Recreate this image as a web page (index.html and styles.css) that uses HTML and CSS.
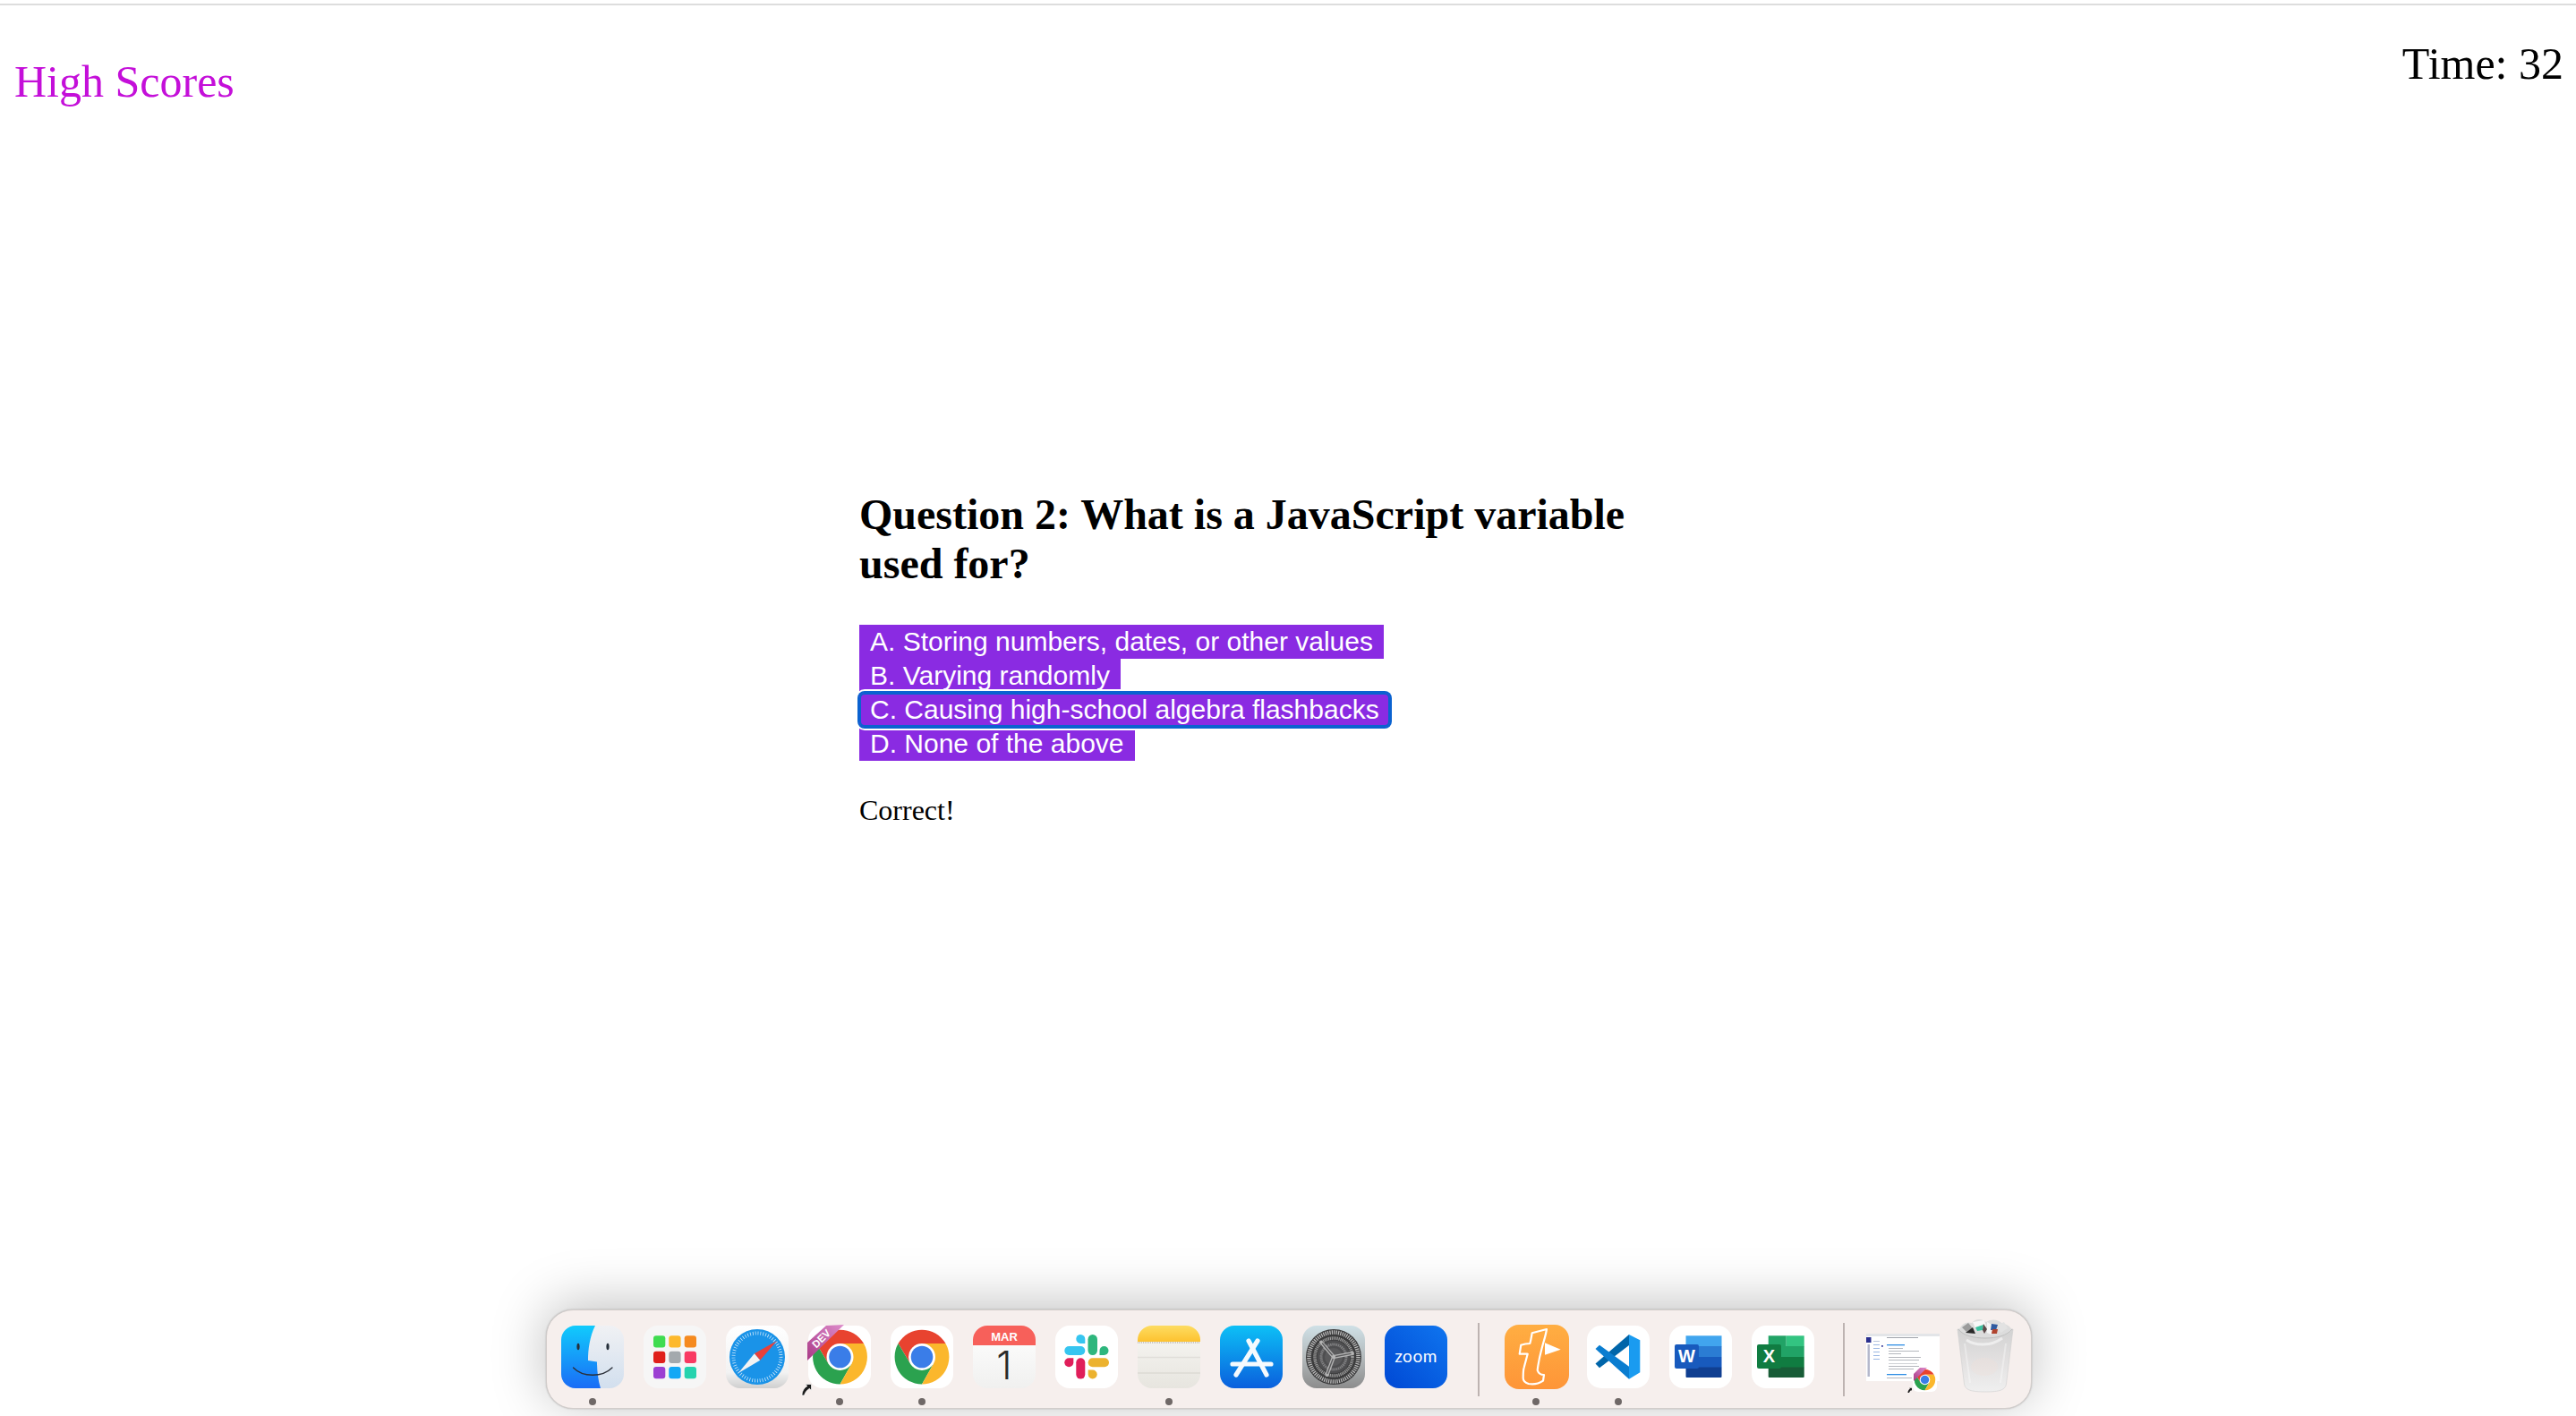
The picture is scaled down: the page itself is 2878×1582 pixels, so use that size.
FILE: index.html
```html
<!DOCTYPE html>
<html lang="en">
<head>
<meta charset="utf-8">
<title>Code Quiz</title>
<link rel="stylesheet" href="styles.css">
</head>
<body>
<svg class="defs" width="0" height="0" aria-hidden="true">
  <defs>
    <symbol id="chrome" viewBox="0 0 70 70" overflow="visible">
      <path fill="#e8432f" d="M61.5 20A30.6 30.6 0 0 0 8.5 20L22 42.5 35 20Z"/>
      <path fill="#2ba24f" d="M8.5 20A30.6 30.6 0 0 0 35 65.6L48 42.5H22Z"/>
      <path fill="#fbb72c" d="M35 65.6A30.6 30.6 0 0 0 61.5 20H35L48 42.5Z"/>
      <circle cx="35" cy="35" r="15" fill="#fff"/>
      <circle cx="35" cy="35" r="12.3" fill="#3a7de8"/>
    </symbol>
    <linearGradient id="finderL" x1="0" y1="0" x2="0" y2="1"><stop offset="0" stop-color="#11cbfc"/><stop offset="1" stop-color="#1a6cf6"/></linearGradient>
    <linearGradient id="finderR" x1="0" y1="0" x2="0" y2="1"><stop offset="0" stop-color="#f0f1f4"/><stop offset="1" stop-color="#d2dfee"/></linearGradient>
    <linearGradient id="safariBg" x1="0" y1="0" x2="0" y2="1"><stop offset="0" stop-color="#fff"/><stop offset=".75" stop-color="#f2f2f2"/><stop offset="1" stop-color="#cfcfcf"/></linearGradient>
    <linearGradient id="paper" x1="0" y1="0" x2="0" y2="1"><stop offset="0" stop-color="#fff"/><stop offset="1" stop-color="#f0f0ef"/></linearGradient>
    <linearGradient id="notesTop" x1="0" y1="0" x2="0" y2="1"><stop offset="0" stop-color="#fddc62"/><stop offset="1" stop-color="#fdc22f"/></linearGradient>
    <linearGradient id="notesPage" x1="0" y1="0" x2="0" y2="1"><stop offset="0" stop-color="#f8f7f4"/><stop offset="1" stop-color="#e7e5df"/></linearGradient>
    <linearGradient id="store" x1="0" y1="0" x2="0" y2="1"><stop offset="0" stop-color="#0dc0f6"/><stop offset="1" stop-color="#0a5fdd"/></linearGradient>
    <linearGradient id="gearBg" x1="0" y1="0" x2="0" y2="1"><stop offset="0" stop-color="#cfe0e6"/><stop offset=".5" stop-color="#b4babc"/><stop offset="1" stop-color="#8c8c8c"/></linearGradient>
    <linearGradient id="zoomBg" x1="1" y1="0" x2="0" y2="1"><stop offset="0" stop-color="#0f75ef"/><stop offset="1" stop-color="#0048d4"/></linearGradient>
    <linearGradient id="tally" x1="0" y1="0" x2="0" y2="1"><stop offset="0" stop-color="#ffae42"/><stop offset="1" stop-color="#fe9538"/></linearGradient>
    <linearGradient id="ribbon" x1="0" y1="1" x2="1" y2="0"><stop offset="0" stop-color="#a93a86"/><stop offset="1" stop-color="#de8ccb"/></linearGradient>
    <linearGradient id="cup" x1="0" y1="0" x2="0" y2="1"><stop offset="0" stop-color="#d2d2d2"/><stop offset=".5" stop-color="#e2e0e0"/><stop offset="1" stop-color="#efefef"/></linearGradient>
    <clipPath id="rr"><rect width="70" height="70" rx="16"/></clipPath>
  </defs>
</svg>

<div class="topline"></div>

<header class="bar">
  <a class="scores">High Scores</a>
  <div class="time">Time: 32</div>
</header>

<main class="quiz">
  <h2 class="question">Question 2: What is a JavaScript variable used for?</h2>
  <div class="options">
    <button class="opt">A. Storing numbers, dates, or other values</button>
    <button class="opt">B. Varying randomly</button>
    <button class="opt focus">C. Causing high-school algebra flashbacks</button>
    <button class="opt">D. None of the above</button>
  </div>
  <p class="result">Correct!</p>
</main>

<footer class="dock">
  <div class="item on">
    <svg class="ic" viewBox="0 0 70 70"><g clip-path="url(#rr)">
      <rect width="70" height="70" fill="url(#finderR)"/>
      <path fill="url(#finderL)" d="M0 0H38C32 12 30 26 30 39L40 40.500C40 50 41 60 44 70H0Z"/>
      <ellipse cx="19" cy="23.500" rx="1.600" ry="3.800" fill="#26303a"/>
      <ellipse cx="52" cy="23.500" rx="1.600" ry="3.800" fill="#26303a"/>
      <path d="M13.500 47C24 58 46 58 57 47" fill="none" stroke="#2b2f38" stroke-width="1.300" stroke-linecap="round"/>
    </g></svg>
    <span class="dot"></span>
  </div>
  <div class="item">
    <svg class="ic" viewBox="0 0 70 70">
      <rect width="70" height="70" rx="16" fill="#f6f6f6"/>
      <rect x="11" y="11.300" width="13.300" height="13.300" rx="3" fill="#3fdc50"/>
      <rect x="28.300" y="11.300" width="13.300" height="13.300" rx="3" fill="#fdb92c"/>
      <rect x="45.700" y="11.300" width="13.300" height="13.300" rx="3" fill="#f58a1f"/>
      <rect x="11" y="28.700" width="13.300" height="13.300" rx="3" fill="#e0201b"/>
      <rect x="28.300" y="28.700" width="13.300" height="13.300" rx="3" fill="#a3a9ad"/>
      <rect x="45.700" y="28.700" width="13.300" height="13.300" rx="3" fill="#f93a62"/>
      <rect x="11" y="46" width="13.300" height="13.300" rx="3" fill="#9c40d2"/>
      <rect x="28.300" y="46" width="13.300" height="13.300" rx="3" fill="#12a8f5"/>
      <rect x="45.700" y="46" width="13.300" height="13.300" rx="3" fill="#25d3ae"/>
    </svg>
    <span class="dot off"></span>
  </div>
  <div class="item">
    <svg class="ic" viewBox="0 0 70 70">
      <rect width="70" height="70" rx="16" fill="url(#safariBg)"/>
      <circle cx="35" cy="35" r="31" fill="#1a93e8"/>
      <circle cx="35" cy="35" r="26.500" fill="none" stroke="#cfe8fa" stroke-width="4" stroke-dasharray=".8 2.100"/>
      <polygon points="57,17 38.200,38.800 31.800,31.200" fill="#e8403a"/>
      <polygon points="14,53 38.200,38.800 31.800,31.200" fill="#f3f3f3"/>
    </svg>
    <span class="dot off"></span>
  </div>
  <div class="item on">
    <svg class="ic" viewBox="0 0 70 70">
      <rect width="70" height="70" rx="16" fill="#fff"/>
      <use href="#chrome" x="0.500" y="0" width="70" height="70"/>
      <polygon points="20,0 40,-1 -1,39 -1,19" fill="url(#ribbon)"/>
      <text class="rib" x="14.500" y="18.500" transform="rotate(-45 14.500 14.500)" text-anchor="middle">DEV</text>
      <path d="M-7 78C-7 73 -4.500 69.500 -1 67.500L-3.500 65.500H3.500V72.500L1.500 70.300C-1.500 72 -3.500 74.500 -4.500 78Z" fill="#1c1c1c" stroke="#fff" stroke-width=".7"/>
    </svg>
    <span class="dot"></span>
  </div>
  <div class="item on">
    <svg class="ic" viewBox="0 0 70 70">
      <rect width="70" height="70" rx="16" fill="#fff"/>
      <use href="#chrome" x="0" y="0" width="70" height="70"/>
    </svg>
    <span class="dot"></span>
  </div>
  <div class="item">
    <svg class="ic" viewBox="0 0 70 70"><g clip-path="url(#rr)">
      <rect width="70" height="70" fill="url(#paper)"/>
      <rect width="70" height="22" fill="#f7605a"/>
      <text class="mar" x="35" y="16.500" text-anchor="middle">MAR</text>
      <text class="day" x="35" y="60" text-anchor="middle">1</text>
    </g></svg>
    <span class="dot off"></span>
  </div>
  <div class="item">
    <svg class="ic" viewBox="0 0 70 70">
      <rect width="70" height="70" rx="16" fill="#fff"/>
      <rect x="10.300" y="23" width="23" height="10" rx="5" fill="#36c5f0"/>
      <path d="M33.300 20H28a5 5 0 1 1 5.300-5Z" fill="#36c5f0"/>
      <rect x="36.500" y="10" width="10.500" height="23" rx="5.200" fill="#2eb67d"/>
      <path d="M49.500 33V28a5 5 0 1 1 5 5Z" fill="#2eb67d"/>
      <rect x="23.300" y="36.300" width="10" height="23.300" rx="5" fill="#e01e5a"/>
      <path d="M20.300 36.300V41.300a5 5 0 1 1 -5-5Z" fill="#e01e5a"/>
      <rect x="36.700" y="36.300" width="23.300" height="10" rx="5" fill="#ecb22e"/>
      <path d="M36.700 49.500H41.700a5 5 0 1 1 -5 5Z" fill="#ecb22e"/>
    </svg>
    <span class="dot off"></span>
  </div>
  <div class="item on">
    <svg class="ic" viewBox="0 0 70 70"><g clip-path="url(#rr)">
      <rect width="70" height="70" fill="url(#notesPage)"/>
      <rect width="70" height="18" fill="url(#notesTop)"/>
      <line x1="0" y1="19" x2="70" y2="19" stroke="#b9b6ae" stroke-width="1.600" stroke-dasharray="1 1"/>
      <line x1="0" y1="35.500" x2="70" y2="35.500" stroke="#e0ded9" stroke-width="1.300"/>
      <line x1="0" y1="53" x2="70" y2="53" stroke="#dcdad4" stroke-width="1.300"/>
    </g></svg>
    <span class="dot"></span>
  </div>
  <div class="item">
    <svg class="ic" viewBox="0 0 70 70">
      <rect width="70" height="70" rx="16" fill="url(#store)"/>
      <g stroke="#fff" stroke-width="5.200" stroke-linecap="round" fill="none" opacity=".96">
        <line x1="32" y1="17" x2="52" y2="55"/>
        <line x1="42" y1="17" x2="18" y2="55"/>
        <line x1="14" y1="43" x2="57" y2="43"/>
      </g>
    </svg>
    <span class="dot off"></span>
  </div>
  <div class="item">
    <svg class="ic" viewBox="0 0 70 70">
      <rect width="70" height="70" rx="16" fill="url(#gearBg)"/>
      <circle cx="35" cy="35" r="31" fill="#3d3d3e"/>
      <circle cx="35" cy="35" r="27.500" fill="none" stroke="#bdbdbd" stroke-width="4.500" stroke-dasharray="1.200 1.200"/>
      <circle cx="35" cy="35" r="24" fill="#3a3a3b"/>
      <circle cx="35" cy="35" r="21" fill="none" stroke="#9a9a9a" stroke-width="3.600" stroke-dasharray="1.200 .8"/>
      <circle cx="35" cy="35" r="18.500" fill="#4e4e50"/>
      <circle cx="35" cy="35" r="14" fill="none" stroke="#808082" stroke-width="3" stroke-dasharray="1.500 .7"/>
      <circle cx="35" cy="35" r="10" fill="#5a5a5c"/>
      <g stroke="#b4b4b4" stroke-width="4" stroke-linecap="round">
        <line x1="35" y1="35" x2="21" y2="18.500"/>
        <line x1="35" y1="35" x2="56" y2="31"/>
        <line x1="35" y1="35" x2="27.500" y2="55"/>
      </g>
      <g stroke="#5c5c5e" stroke-width="1.400" stroke-linecap="round">
        <line x1="35" y1="35" x2="22.500" y2="20"/>
        <line x1="35" y1="35" x2="54" y2="31.400"/>
        <line x1="35" y1="35" x2="28" y2="53.500"/>
      </g>
      <circle cx="35" cy="35" r="2.200" fill="#b4b4b4"/>
    </svg>
    <span class="dot off"></span>
  </div>
  <div class="item">
    <svg class="ic" viewBox="0 0 70 70">
      <rect width="70" height="70" rx="16" fill="url(#zoomBg)"/>
      <text class="zoomtxt" x="35" y="41" text-anchor="middle">zoom</text>
    </svg>
    <span class="dot off"></span>
  </div>

  <div class="sep sep-a"></div>

  <div class="item tally-item on">
    <svg class="ic" viewBox="0 0 70 70" overflow="visible">
      <rect x="0" y="-1" width="72" height="72" rx="16" fill="url(#tally)"/>
      <path d="M30.700 8.300 47 4C46 11 43.500 18 41.700 25 39.500 33 37.500 42 36.700 50 38 54 41 55 44 55L43 61.700C38 65 32 66 26.700 65 22 63.500 20.500 61 20.700 58 20.700 54 20.700 50 21.700 46.700L25.700 31.700H16.700L18.300 21.700C21.500 20.500 25 20 28.300 20 29.500 16 30 12 30.700 8.300Z" fill="none" stroke="#fff" stroke-width="2.200" stroke-linejoin="round"/>
      <polygon points="45,19.300 62.700,26.700 45,32.700" fill="#fff"/>
    </svg>
    <span class="dot"></span>
  </div>
  <div class="item on">
    <svg class="ic" viewBox="0 0 70 70">
      <rect width="70" height="70" rx="16" fill="#fff"/>
      <polygon points="47,10 47,22 14,47.300 9.500,42.500" fill="#0065a9"/>
      <polygon points="9.500,26 14,21.700 47,45.700 47,59.700" fill="#0a7dd0"/>
      <polygon points="47,10 59.300,16.300 59.300,52.300 47,59.700" fill="#1a9bf0"/>
    </svg>
    <span class="dot"></span>
  </div>
  <div class="item">
    <svg class="ic" viewBox="0 0 70 70">
      <rect width="70" height="70" rx="16" fill="#fff"/>
      <rect x="18.500" y="11.300" width="40" height="12" fill="#41a5ee"/>
      <rect x="18.500" y="23" width="40" height="12" fill="#2b7cd3"/>
      <rect x="18.500" y="35" width="40" height="12" fill="#185abd"/>
      <rect x="18.500" y="46.500" width="40" height="11.500" rx="1" fill="#103f91"/>
      <rect x="6" y="21" width="27" height="27" rx="2" fill="#185abd"/>
      <text class="office" x="19.500" y="41" text-anchor="middle">W</text>
    </svg>
    <span class="dot off"></span>
  </div>
  <div class="item">
    <svg class="ic" viewBox="0 0 70 70">
      <rect width="70" height="70" rx="16" fill="#fff"/>
      <rect x="18.700" y="11.300" width="20" height="12" fill="#21a366"/>
      <rect x="38.700" y="11.300" width="20" height="12" fill="#33c481"/>
      <rect x="18.700" y="23" width="40" height="12" fill="#21a366"/>
      <rect x="18.700" y="35" width="40" height="12" fill="#107c41"/>
      <rect x="18.700" y="46.500" width="40" height="11.500" rx="1" fill="#185c37"/>
      <rect x="6" y="21" width="27" height="27" rx="2" fill="#107c41"/>
      <text class="office" x="19.500" y="41" text-anchor="middle">X</text>
    </svg>
    <span class="dot off"></span>
  </div>

  <div class="sep sep-b"></div>

  <div class="item wide">
    <svg class="ic thumb" viewBox="0 0 80 70" overflow="visible">
      <rect x="0" y="9" width="82" height="53" fill="#fff"/>
      <rect x="0" y="9" width="82" height="3" fill="#e3e5e8"/>
      <rect x="0" y="13" width="5.500" height="6" fill="#2a2f8f"/>
      <rect x="1.500" y="21" width="2.500" height="36" fill="#b4b8cc"/>
      <rect x="8" y="17" width="7" height="1" fill="#b9c6dd"/>
      <rect x="8" y="21" width="7" height="1" fill="#9db9e4"/>
      <rect x="8" y="25" width="7" height="1" fill="#9db9e4"/>
      <rect x="8" y="29" width="7" height="1" fill="#9db9e4"/>
      <rect x="8" y="33" width="7" height="1" fill="#9db9e4"/>
      <rect x="8" y="37" width="7" height="1" fill="#9db9e4"/>
      <rect x="17" y="22" width="1.800" height="1.800" fill="#3c3f9c"/>
      <rect x="23" y="13" width="35" height="1" fill="#a0a4ab"/>
      <rect x="23" y="21" width="20" height="1.300" fill="#2f8ee5"/>
      <rect x="25" y="25" width="16" height="1" fill="#b4b7bd"/>
      <rect x="25" y="28" width="34" height="1" fill="#b4b7bd"/>
      <rect x="25" y="31" width="14" height="1" fill="#b4b7bd"/>
      <rect x="25" y="35" width="36" height="1" fill="#b4b7bd"/>
      <rect x="25" y="38" width="34" height="1" fill="#b4b7bd"/>
      <rect x="25" y="42" width="32" height="1" fill="#d0d2d6"/>
      <rect x="25" y="45" width="34" height="1" fill="#b4b7bd"/>
      <rect x="25" y="48" width="28" height="1" fill="#b4b7bd"/>
      <rect x="23" y="54" width="22" height="1.300" fill="#2f8ee5"/>
      <rect x="23" y="58" width="28" height="1" fill="#b4b7bd"/>
      <rect x="52" y="47" width="27" height="27" rx="6" fill="#fff"/>
      <use href="#chrome" x="52" y="47" width="27" height="27"/>
      <polygon points="60,47 68,47 53,62 53,54" fill="url(#ribbon)"/>
      <path d="M46.500 75C46.500 73 47.500 71.500 49 70.500L48 69.800H51V73L50.200 72C49 73 48.300 74 48 75Z" fill="#1c1c1c"/>
    </svg>
  </div>
  <div class="item trash">
    <svg class="ic trash-ic" viewBox="0 -6 62 80" overflow="visible">
      <path d="M0 4 7.500 65C8.500 72 15 74 31 74S53.500 72 54.500 65L62 4Z" fill="url(#cup)" stroke="#cfcfcf" stroke-width=".6"/>
      <path d="M2 5C4 -2 10 -5 16 -3 20 -8 27 -8 32 -4 38 -8 46 -7 50 -2 55 -2 59 1 61 5 58 11 44 14 31 14S5 11 2 5Z" fill="#dcdcdc"/>
      <polygon points="5,2 12,-3 17,3 10,7" fill="#9b9b9b"/>
      <polygon points="17,-4 30,-6 32,1 20,3" fill="#f7f7f7"/>
      <polygon points="9,8 17,2 20,9" fill="#2a2a2a"/>
      <polygon points="20,2 29,-1 28,5 22,6" fill="#3cc2a0"/>
      <polygon points="29,-2 33,4 30,9 28,5" fill="#5c4a4a"/>
      <polygon points="33,-4 40,0 38,10 33,8" fill="#f5f5f5"/>
      <polygon points="38,-2 45,-1 43,5 37,5" fill="#2f5aa0"/>
      <polygon points="39,4 45,4 44,9 38,9" fill="#b0442f"/>
      <polygon points="45,-1 52,-4 56,3 48,8" fill="#e2e2e2"/>
      <path d="M1 4C6 11 18 14 31 14S56 11 61 4" fill="none" stroke="#bfbfbf" stroke-width="1"/>
      <path d="M10 16C20 23 38 23 50 14" fill="none" stroke="#fff" stroke-width="3" opacity=".55"/>
      <path d="M8 20 14 64M54 20 48 64" stroke="#fff" stroke-width="2" opacity=".35" fill="none"/>
      <ellipse cx="30" cy="46" rx="15" ry="10" fill="#efdfdb" opacity=".35"/>
    </svg>
  </div>
</footer>
</body>
</html>
```

FILE: styles.css
```css
* { box-sizing: border-box; }

html, body { margin: 0; padding: 0; }

body {
  height: 1582px;
  width: 2878px;
  overflow: hidden;
  display: flex;
  flex-direction: column;
  background: #fff;
  font-family: "Liberation Serif", "Times New Roman", serif;
  color: #000;
}

.defs { position: absolute; }

.topline {
  flex: none;
  height: 2px;
  margin-top: 4px;
  background: #dddddd;
}

.bar {
  flex: none;
  display: flex;
  justify-content: space-between;
  align-items: flex-start;
  padding: 0 14px 0 16px;
  height: 100px;
  font-size: 50px;
  line-height: 57px;
}

.scores { color: #c40fd9; padding-top: 57px; }

.time { padding-top: 37px; }

.quiz {
  flex: 1;
  width: 958px;
  margin: 0 auto;
  padding-top: 441px;
}

.question {
  margin: 0;
  font-size: 48px;
  font-weight: bold;
  line-height: 55px;
}

.options {
  display: flex;
  flex-direction: column;
  align-items: flex-start;
  margin-top: 41px;
}

.opt {
  display: block;
  height: 38px;
  padding: 0 12px;
  border: 0;
  background: #8a2be2;
  color: #fff;
  font-family: "Liberation Sans", Arial, sans-serif;
  font-size: 30px;
  line-height: 38px;
  white-space: nowrap;
}

.opt.focus {
  position: relative;
  z-index: 1;
  border-radius: 6px;
  box-shadow: inset 0 0 0 2px #0a62d0, 0 0 0 2px #0a62d0, 0 0 0 4px #fff;
}

.result {
  margin: 37px 0 0;
  font-size: 32px;
  line-height: 37px;
}

.dock {
  flex: none;
  display: flex;
  align-items: flex-start;
  gap: 22px;
  width: 1660px;
  height: 111px;
  margin: 0 608px 8px 610px;
  padding: 17px 21px 0 16px;
  border: 1px solid #d2cdcb;
  border-radius: 30px;
  background: #f6efed;
  box-shadow: 0 0 2px rgba(0, 0, 0, 0.25), 0 -6px 60px rgba(0, 0, 0, 0.25);
}

.item {
  flex: none;
  width: 70px;
  display: flex;
  flex-direction: column;
  align-items: center;
  gap: 11px;
}

.item.tally-item { width: 71px; }

.item.wide { width: 80px; }

.item.trash { width: 62px; }

.ic { display: block; width: 70px; height: 70px; overflow: visible; }

.thumb { width: 80px; }

.trash-ic { width: 62px; height: 80px; margin-top: -6px; }

.dot {
  width: 8px;
  height: 8px;
  border-radius: 50%;
  background: #6f6867;
}

.dot.off { visibility: hidden; }

.sep {
  flex: none;
  width: 2px;
  height: 82px;
  margin-top: -3px;
  background: #bdb3b1;
}

.sep-a { margin-left: 12px; margin-right: 5px; }

.sep-b { margin-left: 10px; margin-right: 2px; }

.rib {
  font-family: "Liberation Sans", Arial, sans-serif;
  font-size: 11.500px;
  font-weight: bold;
  fill: #fff;
}

.mar {
  font-family: "Liberation Sans", Arial, sans-serif;
  font-size: 13px;
  font-weight: bold;
  fill: #fff;
}

.day {
  font-family: Inter, "Liberation Sans", sans-serif;
  font-size: 44px;
  font-weight: 300;
  fill: #2b2b2b;
}

.zoomtxt {
  font-family: Lato, "Liberation Sans", sans-serif;
  font-size: 19px;
  font-weight: 400;
  letter-spacing: 0.5px;
  fill: #fff;
}

.office {
  font-family: "Liberation Sans", Arial, sans-serif;
  font-size: 20px;
  font-weight: bold;
  fill: #fff;
}
```
